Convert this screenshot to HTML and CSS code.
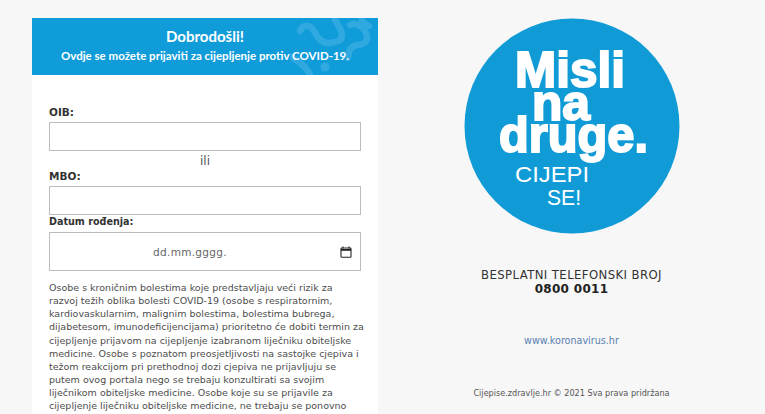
FILE: index.html
```html
<!DOCTYPE html>
<html lang="hr">
<head>
<meta charset="utf-8">
<title>Cijepi se</title>
<link rel="stylesheet" href="styles.css">
</head>
<body>
<div class="page">
  <main class="card">
    <header class="banner">
      <svg class="swirl" viewBox="0 0 88 57" fill="none" aria-hidden="true">
        <path d="M10 13 C13 6 20 6 24 13 C28 21 33 26 40 25 C47 24 52 23 52 17 C52 10 46 7 44 -2" />
        <path d="M60 7 C67 3 76 11 77 18 C78 25 72 27 67 27 C61 28 58 33 58 40" />
        <path d="M72 -2 C70 3 74 6 79 8" />
        <path d="M1 39 C7 42 13 46 18 53 L22 60" />
        <circle class="dot" cx="35" cy="49" r="4.5" />
      </svg>
      <h1 class="banner-title">Dobrodošli!</h1>
      <p class="banner-sub">Ovdje se možete prijaviti za cijepljenje protiv COVID-19.</p>
    </header>
    <form class="form">
      <label class="label" for="oib">OIB:</label>
      <input class="field" id="oib" type="text">
      <div class="or">ili</div>
      <label class="label" for="mbo">MBO:</label>
      <input class="field" id="mbo" type="text">
      <label class="label label-date" for="dob">Datum rođenja:</label>
      <div class="field field-date" id="dob">
        <span class="date-text">dd.mm.gggg.</span>
        <svg class="cal" viewBox="0 0 12 12" aria-hidden="true">
          <path d="M3 .5v2M9 .5v2" />
          <rect x="1" y="2" width="10" height="9.2" rx=".8" />
          <path class="cal-band" d="M1 3h10v1.8H1z" />
        </svg>
      </div>
      <p class="note">Osobe s kroničnim bolestima koje predstavljaju veći rizik za<br>
razvoj težih oblika bolesti COVID-19 (osobe s respiratornim,<br>
kardiovaskularnim, malignim bolestima, bolestima bubrega,<br>
dijabetesom, imunodeficijencijama) prioritetno će dobiti termin za<br>
cijepljenje prijavom na cijepljenje izabranom liječniku obiteljske<br>
medicine. Osobe s poznatom preosjetljivosti na sastojke cjepiva i<br>
težom reakcijom pri prethodnoj dozi cjepiva ne prijavljuju se<br>
putem ovog portala nego se trebaju konzultirati sa svojim<br>
liječnikom obiteljske medicine. Osobe koje su se prijavile za<br>
cijepljenje liječniku obiteljske medicine, ne trebaju se ponovno<br>
prijavljivati.</p>
    </form>
  </main>
  <aside class="side">
    <svg class="logo" viewBox="0 0 216 216" role="img" aria-label="Misli na druge. Cijepi se!">
      <circle class="logo-bg" cx="108" cy="108" r="107.5" />
      <text class="logo-big" x="51" y="69" textLength="110" lengthAdjust="spacingAndGlyphs">Misli</text>
      <text class="logo-big" x="68" y="102" textLength="58" lengthAdjust="spacingAndGlyphs">na</text>
      <text class="logo-big" x="35" y="134" textLength="149" lengthAdjust="spacingAndGlyphs">druge.</text>
      <text class="logo-small" x="51" y="164" textLength="74" lengthAdjust="spacingAndGlyphs">CIJEPI</text>
      <text class="logo-small" x="83" y="187" textLength="34" lengthAdjust="spacingAndGlyphs">SE!</text>
    </svg>
    <div class="phone">
      <div class="phone-label">BESPLATNI TELEFONSKI BROJ</div>
      <div class="phone-number">0800 0011</div>
    </div>
    <a class="link" href="#">www.koronavirus.hr</a>
    <div class="copy">Cijepise.zdravlje.hr © 2021 Sva prava pridržana</div>
  </aside>
</div>
</body>
</html>
```
FILE: styles.css
```css
html, body {
  margin: 0;
  height: 414px;
  overflow: hidden;
}
body {
  background: #f7f7f7;
  color: #444;
  font-family: "DejaVu Sans", Verdana, sans-serif;
}
.page {
  display: flex;
  height: 414px;
  padding: 18px 0 0 32px;
  box-sizing: border-box;
  overflow: hidden;
}
.card {
  width: 346px;
  flex: none;
  background: #fff;
  height: 396px;
  overflow: hidden;
}
.banner {
  position: relative;
  height: 57px;
  background: #0f9cd9;
  color: #fff;
  text-align: center;
  font-family: Lato, "Noto Sans", sans-serif;
  overflow: hidden;
}
.swirl {
  position: absolute;
  top: 0;
  right: 0;
  width: 88px;
  height: 57px;
}
.swirl path {
  stroke: #2fa9df;
  stroke-width: 6.5;
  stroke-linecap: round;
}
.swirl .dot { fill: #2fa9df; }
.banner-title {
  position: relative;
  margin: 0;
  padding-top: 9px;
  font-size: 15px;
  line-height: 18px;
  font-weight: 700;
}
.banner-sub {
  position: relative;
  margin: 3px 0 0;
  font-size: 11.5px;
  line-height: 15px;
  font-weight: 700;
}
.form {
  padding: 31px 17px 0;
}
.label {
  display: block;
  font-size: 10.5px;
  line-height: 13px;
  font-weight: 700;
  color: #333;
  margin-bottom: 3px;
}
.field {
  display: block;
  box-sizing: border-box;
  width: 100%;
  height: 29px;
  margin: 0;
  padding: 0;
  background: #fff;
  border: 1px solid #bcbcbc;
  border-radius: 0;
}
.or {
  text-align: center;
  font-size: 12px;
  line-height: 20px;
  color: #555;
  margin-bottom: -1px;
}
.label-date {
  margin-bottom: 4px;
  font-size: 9.6px;
}
.field-date {
  display: flex;
  align-items: center;
  height: 39px;
  padding: 0 8px 0 0;
}
.date-text {
  flex: 1;
  text-align: center;
  font-size: 10.5px;
  letter-spacing: .3px;
  color: #666;
  padding-right: 10px;
}
.cal {
  width: 12px;
  height: 12px;
  fill: none;
  stroke: #222;
  stroke-width: 1.1;
}
.cal-band {
  fill: #222;
  stroke: none;
}
.note {
  margin: 10px 0 0;
  font-size: 9.5px;
  line-height: 13.15px;
  color: #4d4d4d;
  white-space: nowrap;
}
.side {
  flex: 1;
  display: flex;
  flex-direction: column;
  align-items: center;
}
.logo {
  width: 216px;
  height: 216px;
  flex: none;
  margin-bottom: 33px;
}
.logo-bg { fill: #119bd6; }
.logo-big {
  fill: #fff;
  font-family: "Liberation Sans", Arial, sans-serif;
  font-weight: 700;
  font-size: 50px;
  stroke: #fff;
  stroke-width: 2;
}
.logo-small {
  fill: #fff;
  font-family: "Liberation Sans", Arial, sans-serif;
  font-size: 22px;
}
.phone {
  text-align: center;
  color: #333;
  padding-top: 1px;
}
.phone-label {
  font-size: 11.7px;
  line-height: 14px;
  letter-spacing: .4px;
}
.phone-number {
  font-size: 12px;
  line-height: 14px;
  font-weight: 700;
  letter-spacing: .3px;
  color: #222;
}
.link {
  margin-top: 38px;
  font-size: 9.6px;
  line-height: 13px;
  color: #5a80b0;
  text-decoration: none;
}
.copy {
  margin-top: 40px;
  font-size: 8.15px;
  line-height: 12px;
  color: #555;
}
```
